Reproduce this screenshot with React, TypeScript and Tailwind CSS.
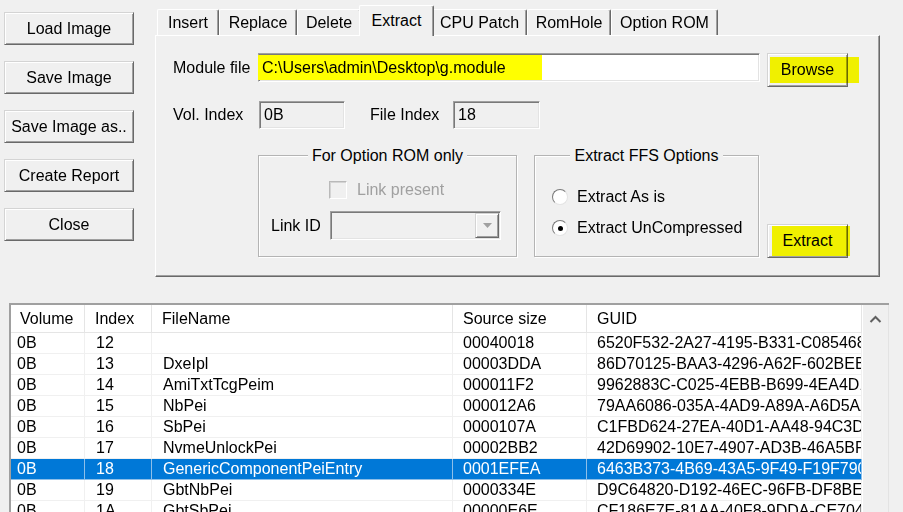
import React from "react";

const raised =
  "bg-[#f0f0f0] border border-t-[#d4d4d4] border-l-[#d4d4d4] border-b-[#696969] border-r-[#696969] shadow-[inset_1px_1px_0_#ffffff,inset_-1px_-1px_0_#a0a0a0]";
const sunken =
  "border border-t-[#a0a0a0] border-l-[#a0a0a0] border-b-white border-r-white shadow-[inset_1px_1px_0_#797979,inset_-1px_-1px_0_#e3e3e3]";

const leftButtons = ["Load Image", "Save Image", "Save Image as..", "Create Report", "Close"];

const tabs: { label: string; cls: string; sel?: boolean }[] = [
  { label: "Insert", cls: "w-[62px]" },
  { label: "Replace", cls: "w-[78px]" },
  { label: "Delete", cls: "w-[64px]" },
  { label: "Extract", cls: "w-[75px]", sel: true },
  { label: "CPU Patch", cls: "w-[95px]" },
  { label: "RomHole", cls: "w-[84px]" },
  { label: "Option ROM", cls: "w-[107px]" },
];

const rows = [
  ["0B", "12", "", "00040018", "6520F532-2A27-4195-B331-C08546868A1C"],
  ["0B", "13", "DxeIpl", "00003DDA", "86D70125-BAA3-4296-A62F-602BEBBB9081"],
  ["0B", "14", "AmiTxtTcgPeim", "000011F2", "9962883C-C025-4EBB-B699-4EA4D1B2A9C3"],
  ["0B", "15", "NbPei", "000012A6", "79AA6086-035A-4AD9-A89A-A6D5AA27F0E2"],
  ["0B", "16", "SbPei", "0000107A", "C1FBD624-27EA-40D1-AA48-94C3DC5C7E0D"],
  ["0B", "17", "NvmeUnlockPei", "00002BB2", "42D69902-10E7-4907-AD3B-46A5BF8E2A1C"],
  ["0B", "18", "GenericComponentPeiEntry", "0001EFEA", "6463B373-4B69-43A5-9F49-F19F790E21DA"],
  ["0B", "19", "GbtNbPei", "0000334E", "D9C64820-D192-46EC-96FB-DF8BE8A1C2B4"],
  ["0B", "1A", "GbtSbPei", "00000E6E", "CF186E7E-81AA-40F8-9DDA-CE704F2A91B0"],
];

const colW = ["w-[74px]", "w-[67px]", "w-[301px]", "w-[134px]", "w-[275px]"];
const headerPad = ["pl-[9px]", "pl-[10px]", "pl-[10px]", "pl-[10px]", "pl-[10px]"];
const rowPad = ["pl-[6px]", "pl-[11px]", "pl-[11px]", "pl-[10px]", "pl-[10px]"];
const headers = ["Volume", "Index", "FileName", "Source size", "GUID"];

function Radio({ checked }: { checked?: boolean }) {
  return (
    <div className="w-[16px] h-[16px] rounded-full bg-white border border-t-[#7a7a7a] border-l-[#7a7a7a] border-b-[#e3e3e3] border-r-[#e3e3e3] flex items-center justify-center">
      {checked && <div className="w-[5px] h-[5px] rounded-full bg-black" />}
    </div>
  );
}

export default function App() {
  return (
    <div className="w-[903px] h-[512px] overflow-hidden bg-[#f0f0f0] text-[16px] text-black [font-family:'Liberation_Sans',Arial,sans-serif] flex flex-col">
      {/* top section */}
      <div className="flex h-[277px] shrink-0">
        <div className="w-[155px] flex flex-col gap-[16px] pt-[12px] pl-[4px]">
          {leftButtons.map((b) => (
            <div key={b} className={`${raised} w-[130px] h-[33px] flex items-center justify-center leading-none`}>
              {b}
            </div>
          ))}
        </div>

        <div className="flex flex-col w-[725px]">
          {/* tabs */}
          <div className="h-[35px] flex items-end pl-[2px]">
            {tabs.map((t) =>
              t.sel ? (
                <div
                  key={t.label}
                  className={`${t.cls} relative z-10 -mx-[2px] -mb-[1px] h-[31px] bg-[#f0f0f0] border-t border-l border-t-white border-l-white border-r border-r-[#696969] shadow-[inset_-1px_0_0_#a0a0a0] rounded-t-[2px] flex items-center justify-center pb-[1px] leading-none`}
                >
                  {t.label}
                </div>
              ) : (
                <div
                  key={t.label}
                  className={`${t.cls} h-[26px] bg-[#f0f0f0] border-t border-l border-t-white border-l-white border-r border-r-[#696969] shadow-[inset_-1px_0_0_#a0a0a0] rounded-t-[2px] flex items-center justify-center leading-none`}
                >
                  {t.label}
                </div>
              )
            )}
          </div>

          {/* panel */}
          <div className="w-[725px] h-[242px] border-t border-l border-t-white border-l-white border-r border-b border-r-[#696969] border-b-[#696969] shadow-[inset_-1px_-1px_0_#a0a0a0] pl-[17px] pt-[17px] flex flex-col">
            {/* row 1 */}
            <div className="flex items-start h-[34px]">
              <div className="w-[85px] h-[29px] flex items-center leading-none">Module file</div>
              <div className={`${sunken} bg-white w-[502px] h-[29px] flex items-center`}>
                <span className="bg-[#ffff00] h-[25px] w-[284px] -ml-[1px] pl-[4px] flex items-center leading-none whitespace-nowrap">
                  C:\Users\admin\Desktop\g.module
                </span>
              </div>
              <div className="relative ml-[7px]">
                <div className={`${raised} w-[81px] h-[34px] flex items-center justify-center leading-none`}>Browse</div>
                <div className="absolute left-[3px] top-[4px] w-[89px] h-[26px] bg-[#ffff00] mix-blend-multiply" />
              </div>
            </div>

            {/* row 2 */}
            <div className="flex items-center mt-[14px] h-[28px]">
              <div className="w-[86px] leading-none">Vol. Index</div>
              <div className={`${sunken} w-[86px] h-[28px] flex items-center pl-[4px] leading-none`}>0B</div>
              <div className="w-[83px] ml-[25px] leading-none">File Index</div>
              <div className={`${sunken} w-[87px] h-[28px] flex items-center pl-[4px] leading-none`}>18</div>
            </div>

            {/* row 3 */}
            <div className="flex mt-[26px] h-[102px]">
              <div className="relative ml-[85px] w-[259px] h-[102px] border border-[#b4b4b4] shadow-[inset_1px_1px_0_#ffffff,1px_1px_0_#ffffff] flex flex-col">
                <div className="absolute -top-[9px] left-0 right-0 flex justify-center">
                  <span className="bg-[#f0f0f0] px-[4px] leading-[18px]">For Option ROM only</span>
                </div>
                <div className="flex items-center gap-[10px] pl-[70px] pt-[25px] h-[43px]">
                  <div className="w-[18px] h-[18px] bg-[#f0f0f0] border border-t-[#b9b9b9] border-l-[#b9b9b9] border-b-white border-r-white shadow-[inset_1px_1px_0_#d4d4d4]" />
                  <span className="text-[#a0a0a0] leading-none">Link present</span>
                </div>
                <div className="flex items-center pl-[12px] mt-[12px]">
                  <div className="w-[59px] leading-none">Link ID</div>
                  <div className={`${sunken} bg-[#f0f0f0] w-[171px] h-[29px] flex items-center justify-end pr-[1px]`}>
                    <div className={`${raised} w-[24px] h-[25px] flex items-center justify-center`}>
                      <svg width="9" height="5" viewBox="0 0 9 5">
                        <polygon points="0,0 9,0 4.5,5" fill="#a0a0a0" />
                      </svg>
                    </div>
                  </div>
                </div>
              </div>

              <div className="relative ml-[17px] w-[225px] h-[102px] border border-[#b4b4b4] shadow-[inset_1px_1px_0_#ffffff,1px_1px_0_#ffffff] flex flex-col pl-[17px] pt-[33px] gap-[15px]">
                <div className="absolute -top-[9px] left-0 right-0 flex justify-center">
                  <span className="bg-[#f0f0f0] px-[4px] leading-[18px]">Extract FFS Options</span>
                </div>
                <div className="flex items-center gap-[9px] h-[16px]">
                  <Radio />
                  <span className="leading-none">Extract As is</span>
                </div>
                <div className="flex items-center gap-[9px] h-[16px]">
                  <Radio checked />
                  <span className="leading-none">Extract UnCompressed</span>
                </div>
              </div>

              <div className="relative ml-[8px] self-end -mb-[1px]">
                <div className={`${raised} w-[81px] h-[34px] flex items-center justify-center leading-none`}>Extract</div>
                <div className="absolute left-[5px] top-[2px] w-[78px] h-[30px] bg-[#ffff00] mix-blend-multiply" />
              </div>
            </div>
          </div>
        </div>
      </div>

      {/* list */}
      <div className="mt-[26px] ml-[9px] w-[880px] flex-1 min-h-0 overflow-hidden border-t-2 border-l-2 border-t-[#a0a0a0] border-l-[#a0a0a0] flex bg-white">
        <div className="w-[851px] flex flex-col shrink-0">
          <div className="flex h-[28px] shrink-0 bg-white">
            {headers.map((h, i) => (
              <div
                key={h}
                className={`${colW[i]} ${headerPad[i]} h-full border-r border-b border-[#e5e5e5] flex items-center leading-none whitespace-nowrap`}
              >
                {h}
              </div>
            ))}
          </div>
          {rows.map((r, ri) => {
            const sel = r[1] === "18";
            return (
              <div key={ri} className={`flex h-[21px] shrink-0 ${sel ? "bg-[#0078d7] text-white" : "bg-white"}`}>
                {r.map((c, i) => (
                  <div
                    key={i}
                    className={`${colW[i]} ${rowPad[i]} h-full border-r border-b ${sel ? "border-[#8dbfe9]" : "border-[#f0f0f0]"} flex items-center leading-none whitespace-nowrap overflow-hidden`}
                  >
                    {c}
                  </div>
                ))}
              </div>
            );
          })}
        </div>
        <div className="w-[26px] shrink-0 bg-[#f0f0f0] border-l border-white flex flex-col items-center pt-[10px]">
          <svg width="13" height="8" viewBox="0 0 13 8">
            <polyline points="1.5,7 6.5,2 11.5,7" fill="none" stroke="#606060" strokeWidth="2" />
          </svg>
        </div>
        <div className="w-[1px] shrink-0 bg-[#e3e3e3]" />
      </div>
    </div>
  );
}
